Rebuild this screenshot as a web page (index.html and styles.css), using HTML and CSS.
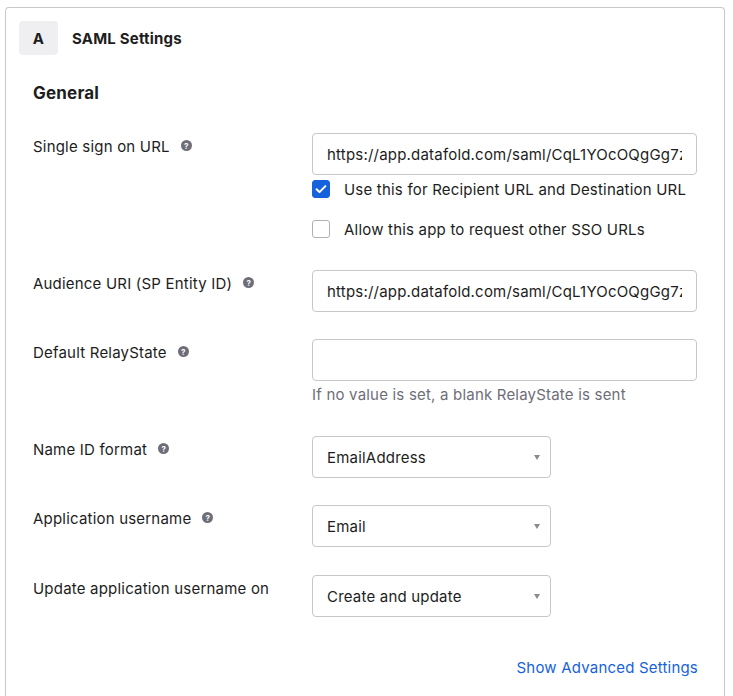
FILE: index.html
```html
<!DOCTYPE html>
<html lang="en">
<head>
<meta charset="utf-8">
<title>SAML Settings</title>
<link rel="stylesheet" href="styles.css">
</head>
<body>
<div class="card">
  <div class="card-header">
    <div class="badge">A</div>
    <div class="title">SAML Settings</div>
  </div>
  <div class="card-body">
    <h2 class="section-title">General</h2>

    <div class="row">
      <div class="label">Single sign on URL <span class="help">?</span></div>
      <div class="field">
        <input class="input" type="text" value="https://app.datafold.com/saml/CqL1YOcOQgGg7zXkP2" readonly>
        <div class="checks">
          <label class="check"><span class="box checked"><svg viewBox="0 0 18 18" width="18" height="18"><path d="M4.6 9.2l2.9 2.9 5.9-6" fill="none" stroke="#fff" stroke-width="2" stroke-linecap="round" stroke-linejoin="round"/></svg></span>Use this for Recipient URL and Destination URL</label>
          <label class="check"><span class="box"></span>Allow this app to request other SSO URLs</label>
        </div>
      </div>
    </div>

    <div class="row">
      <div class="label">Audience URI (SP Entity ID) <span class="help">?</span></div>
      <div class="field">
        <input class="input" type="text" value="https://app.datafold.com/saml/CqL1YOcOQgGg7zXkP2" readonly>
      </div>
    </div>

    <div class="row">
      <div class="label">Default RelayState <span class="help">?</span></div>
      <div class="field">
        <input class="input" type="text" value="">
        <div class="hint">If no value is set, a blank RelayState is sent</div>
      </div>
    </div>

    <div class="row">
      <div class="label">Name ID format <span class="help">?</span></div>
      <div class="field">
        <div class="select"><span>EmailAddress</span><span class="caret"></span></div>
      </div>
    </div>

    <div class="row row-wide">
      <div class="label">Application username <span class="help">?</span></div>
      <div class="field">
        <div class="select"><span>Email</span><span class="caret"></span></div>
      </div>
    </div>

    <div class="row">
      <div class="label">Update application username on</div>
      <div class="field">
        <div class="select"><span>Create and update</span><span class="caret"></span></div>
      </div>
    </div>

    <div class="advanced"><a href="#">Show Advanced Settings</a></div>
  </div>
</div>
</body>
</html>
```

FILE: styles.css
```css
* { box-sizing: border-box; }
html, body { margin: 0; padding: 0; background: #fff; }
body {
  font-family: "Inter", "Liberation Sans", sans-serif;
  font-size: 15px;
  letter-spacing: 0.2px;
  color: #1d1d21;
  overflow: hidden;
  height: 696px;
}
.card {
  margin: 7px 0 0 5px;
  width: 720px;
  height: 720px;
  border: 1px solid #c8c8cd;
  border-bottom: none;
  border-radius: 4px 4px 0 0;
}
.card-header {
  display: flex;
  align-items: center;
  gap: 14px;
  padding: 13px 13px 0;
}
.badge {
  width: 39px;
  height: 34px;
  background: #efeff1;
  border-radius: 4px;
  display: flex;
  align-items: center;
  justify-content: center;
  font-weight: 700;
  font-size: 15px;
}
.title { font-weight: 700; font-size: 15px; }
.card-body { padding: 0 26px 0 27px; }
.section-title {
  margin: 26px 0 28px;
  font-size: 17px;
  line-height: 24px;
  font-weight: 700;
}
.row {
  display: grid;
  grid-template-columns: 279px 385px;
  margin-bottom: 27px;
}
.row-wide { margin-bottom: 28px; }
.label {
  padding-top: 4px;
  line-height: 20px;
  display: flex;
  align-items: flex-start;
}
.help {
  display: inline-flex;
  align-items: center;
  justify-content: center;
  width: 11px;
  height: 11px;
  margin: 3px 0 0 11px;
  border-radius: 50%;
  background: #6e6e78;
  color: #fff;
  font-size: 8px;
  font-weight: 700;
  letter-spacing: 0;
  line-height: 1;
}
.input, .select {
  height: 42px;
  border: 1px solid #c6c6cc;
  border-radius: 4px;
  padding: 0 14px;
  white-space: nowrap;
  background: #fff;
}
.input {
  display: block;
  width: 100%;
  margin: 0;
  font: inherit;
  letter-spacing: inherit;
  color: inherit;
  outline: none;
}
.select {
  display: flex;
  align-items: center;
  width: 239px;
  justify-content: space-between;
  padding-right: 10px;
}
.caret {
  width: 0;
  height: 0;
  border-left: 3px solid transparent;
  border-right: 3px solid transparent;
  border-top: 5px solid #8a8a93;
}
.checks {
  display: flex;
  flex-direction: column;
  gap: 22px;
  margin-top: 5px;
  padding-bottom: 5px;
}
.check {
  display: flex;
  align-items: center;
  gap: 14px;
  height: 18px;
}
.box {
  width: 18px;
  height: 18px;
  border: 1px solid #b0b0b8;
  border-radius: 3px;
  flex: none;
}
.box.checked { background: #1662dd; border-color: #1662dd; display: flex; }
.box.checked svg { margin: -1px; }
.hint {
  color: #6e6e78;
  line-height: 20px;
  margin-top: 4px;
  padding-bottom: 4px;
}
.advanced {
  display: flex;
  justify-content: flex-end;
  margin-top: 41px;
  line-height: 20px;
}
.advanced a { color: #1662dd; text-decoration: none; }
```
